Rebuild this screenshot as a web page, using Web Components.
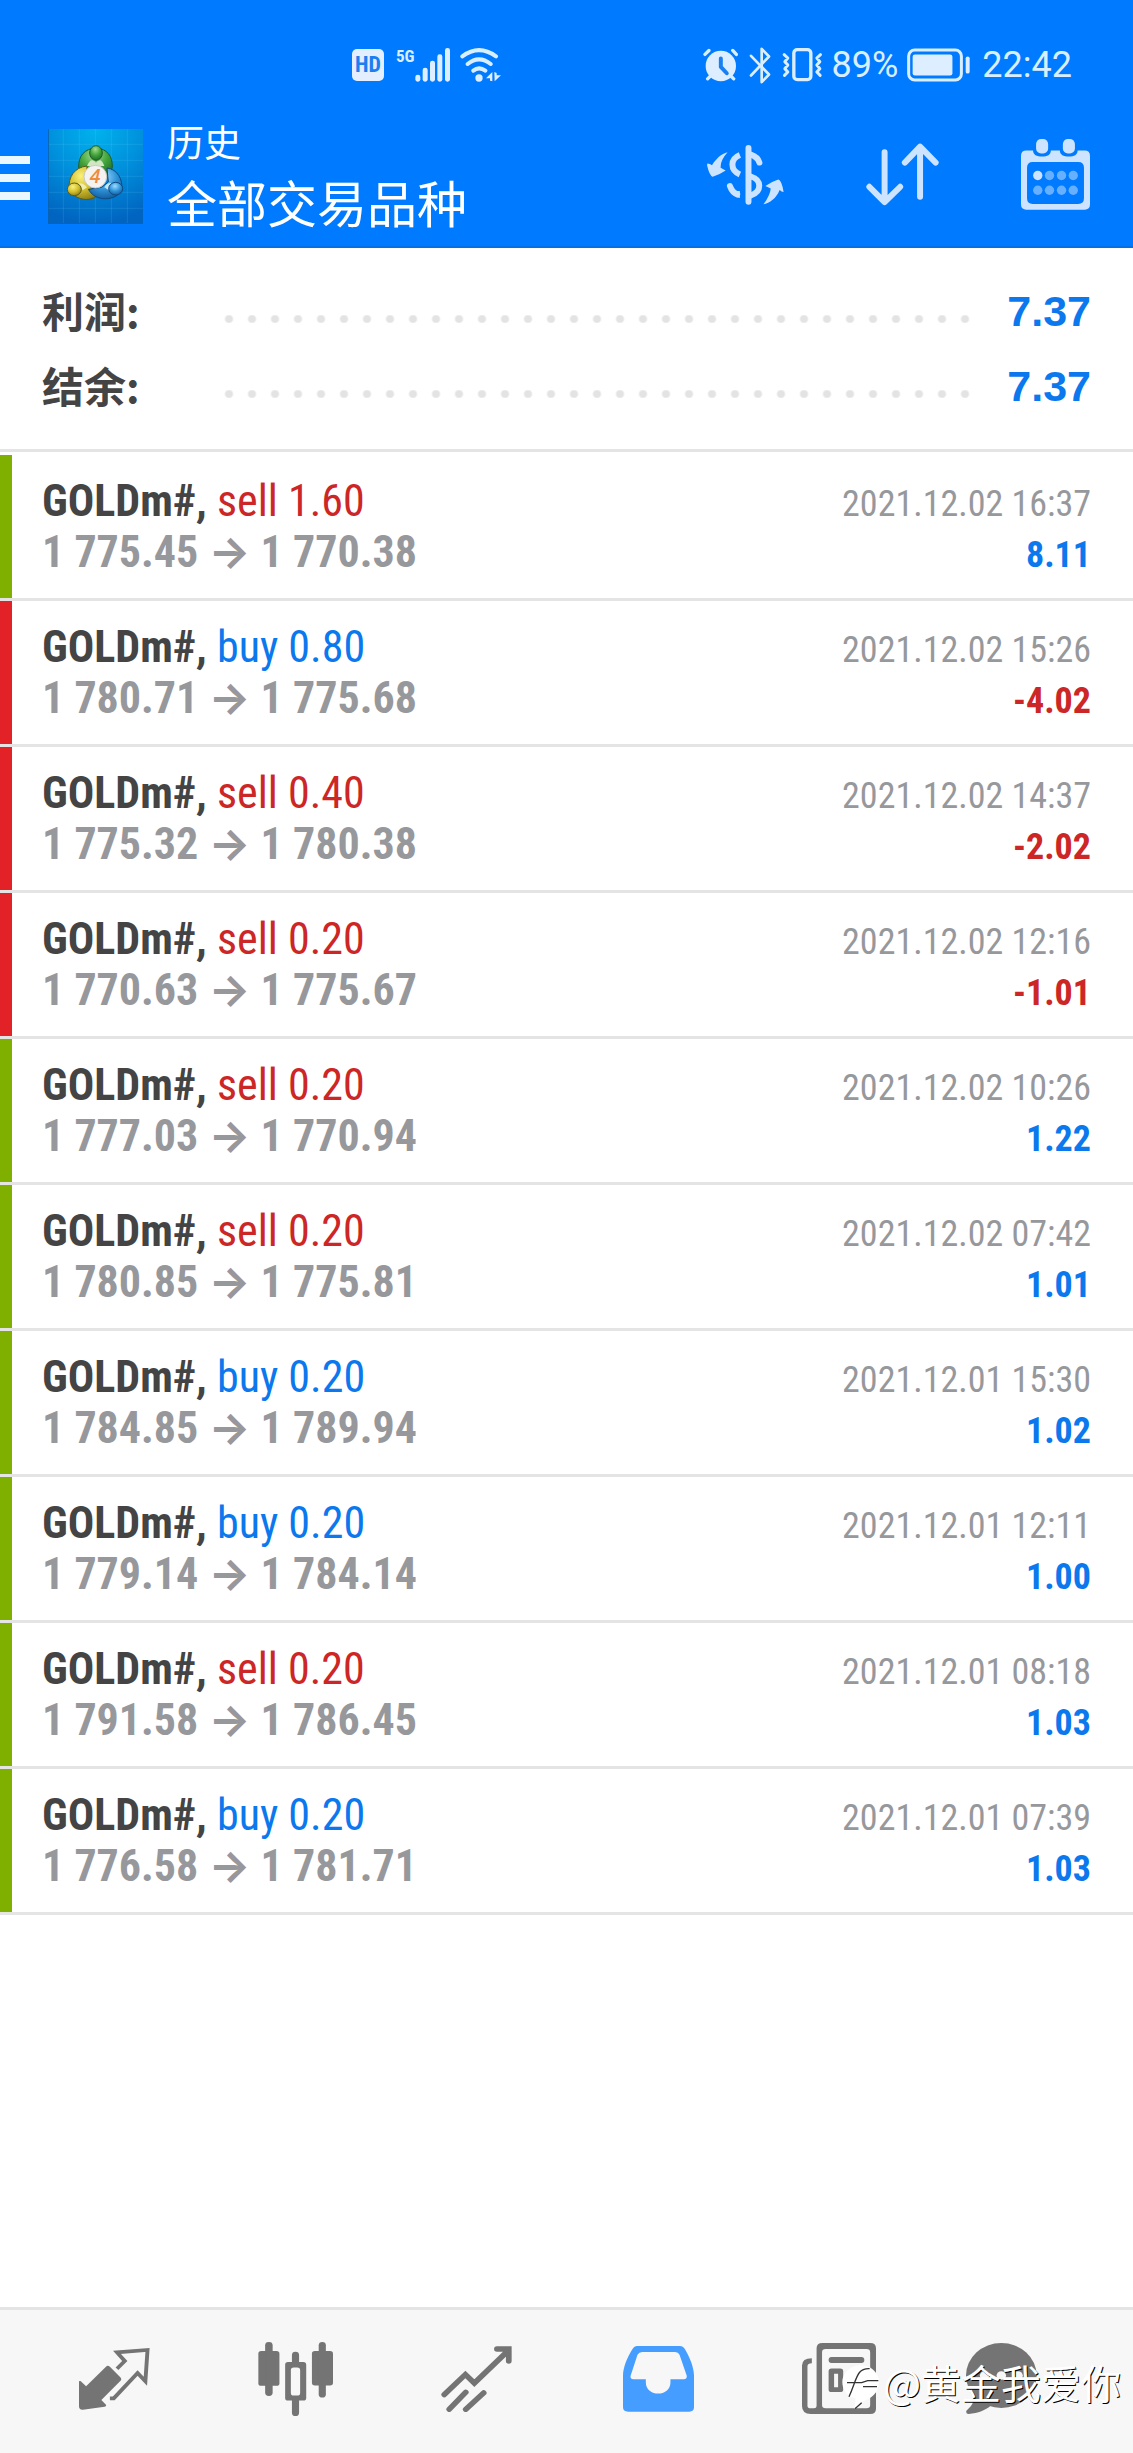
<!DOCTYPE html>
<html lang="zh-CN">
<head>
<meta charset="utf-8">
<meta name="viewport" content="width=device-width, initial-scale=1">
<title>历史</title>
<style>
html,body{margin:0;background:#fff}
body{
  --blue:#007aff;--buy:#0b78ee;--sell:#cd2626;--ink:#444;--muted:#97989c;--line:#e4e4e4;
  --narrow:"Roboto Condensed","Liberation Sans Narrow","Liberation Sans",sans-serif;
  --cjk:"Noto Sans CJK SC",sans-serif;
  font-family:var(--cjk);color:var(--ink)
}
</style>
</head>
<body>
<app-screen>
  <status-bar slot="top"></status-bar>
  <tool-bar slot="top"><span slot="caption">历史</span><span slot="title">全部交易品种</span></tool-bar>
  <account-summary>
    <summary-line><span slot="label">利润:</span>7.37</summary-line>
    <summary-line><span slot="label">结余:</span>7.37</summary-line>
  </account-summary>
  <trade-list>
    <trade-row side="sell" volume="1.60" open="1 775.45" close="1 770.38" time="2021.12.02 16:37" profit="8.11">GOLDm#</trade-row>
    <trade-row side="buy" volume="0.80" open="1 780.71" close="1 775.68" time="2021.12.02 15:26" profit="-4.02">GOLDm#</trade-row>
    <trade-row side="sell" volume="0.40" open="1 775.32" close="1 780.38" time="2021.12.02 14:37" profit="-2.02">GOLDm#</trade-row>
    <trade-row side="sell" volume="0.20" open="1 770.63" close="1 775.67" time="2021.12.02 12:16" profit="-1.01">GOLDm#</trade-row>
    <trade-row side="sell" volume="0.20" open="1 777.03" close="1 770.94" time="2021.12.02 10:26" profit="1.22">GOLDm#</trade-row>
    <trade-row side="sell" volume="0.20" open="1 780.85" close="1 775.81" time="2021.12.02 07:42" profit="1.01">GOLDm#</trade-row>
    <trade-row side="buy" volume="0.20" open="1 784.85" close="1 789.94" time="2021.12.01 15:30" profit="1.02">GOLDm#</trade-row>
    <trade-row side="buy" volume="0.20" open="1 779.14" close="1 784.14" time="2021.12.01 12:11" profit="1.00">GOLDm#</trade-row>
    <trade-row side="sell" volume="0.20" open="1 791.58" close="1 786.45" time="2021.12.01 08:18" profit="1.03">GOLDm#</trade-row>
    <trade-row side="buy" volume="0.20" open="1 776.58" close="1 781.71" time="2021.12.01 07:39" profit="1.03">GOLDm#</trade-row>
  </trade-list>
  <tab-bar slot="bottom"><water-mark>@黄金我爱你</water-mark></tab-bar>
</app-screen>

<script>
function define(name, html, setup) {
  const t = document.createElement('template');
  t.innerHTML = html;
  customElements.define(name, class extends HTMLElement {
    constructor() {
      super();
      this.attachShadow({mode: 'open'}).appendChild(t.content.cloneNode(true));
    }
    connectedCallback() { if (setup) setup(this, this.shadowRoot); }
  });
}

define('app-screen', `
<style>
:host{display:flex;flex-direction:column;min-height:100vh}
main{flex:1}
</style>
<header><slot name="top"></slot></header><main><slot></slot></main><slot name="bottom"></slot>`);

define('status-bar', `
<style>
:host{display:flex;justify-content:space-between;align-items:center;height:82px;padding:24px 61px 0 352px;background:var(--blue);color:#d9efff;font:36px/40px Roboto,sans-serif}
div{display:flex;align-items:center}
svg{display:block;fill:#dceeff;stroke:none}
.l{fill:none;stroke:#d9efff;stroke-linecap:round;stroke-linejoin:round}
.hd{width:32px;height:32px;border-radius:5px;background:#e3efff;color:#1a7ff0;font:bold 22px/32px var(--narrow);text-align:center}
.net{margin-left:12px;align-self:flex-start;font:bold 17px/16px var(--narrow)}
.wifi{margin-left:10px}
.right svg+svg{margin-left:11px}
.pct{margin:0 9px}
time{margin-left:12px}
</style>
<div>
  <span class="hd">HD</span><span class="net">5G</span>
  <svg width="35" height="34" viewBox="250 80 105 102"><rect x="251" y="160" width="15" height="21" rx="7"/><rect x="273" y="139" width="15" height="42" rx="7"/><rect x="295" y="118" width="15" height="63" rx="7"/><rect x="317" y="99" width="15" height="82" rx="7"/><rect x="340" y="80" width="15" height="101" rx="7"/></svg>
  <svg class="wifi" width="41" height="34" viewBox="385 80 123 102"><g class="l" stroke-width="12"><path d="M392 105Q442 68 493 105M408 128Q442 100 477 128M425 148Q442 134 461 148"/></g><circle cx="442" cy="170" r="11"/><path d="M463 171L482 152V180L475 178V171ZM488 152L495 155V162H508L489 180Z"/></svg>
</div>
<div class="right">
  <svg width="35" height="34" viewBox="70 80 106 102"><circle cx="124" cy="134" r="46"/><path class="l" stroke-width="10" d="M84 173L95 162M163 173L152 162M76 99L88 87M160 87L171 99"/><path d="M124 111V137L142 156" fill="none" stroke="#1a7ff0" stroke-width="12" stroke-linecap="round" stroke-linejoin="round"/></svg>
  <svg width="22" height="37" viewBox="208 75 66 110"><path class="l" stroke-width="8" d="M214 160L268 103L246 80V180L268 157L214 101"/></svg>
  <svg width="41" height="34" viewBox="311 80 122 102"><g class="l"><rect x="346" y="85" width="51" height="90" rx="10" stroke-width="10"/><path stroke-width="9" d="M317 100L328 110L319 121L328 131L319 142L328 152L318 162M426 100L415 110L424 121L415 131L424 142L415 152L425 162"/></g></svg>
  <span class="pct">89%</span>
  <svg width="63" height="34" viewBox="681 82 190 102"><rect class="l" x="686" y="88" width="159" height="90" rx="18" stroke-width="9"/><rect x="698" y="101" width="120" height="64" rx="7"/><rect x="858" y="107" width="12" height="52" rx="6"/></svg>
  <time>22:42</time>
</div>`);

define('tool-bar', `
<style>
:host{display:flex;align-items:center;height:140px;padding-right:43px;background:var(--blue);border-bottom:2px solid #0570e3;color:#fff}
button{display:block;padding:0;border:0;background:none;color:#cce4ff}
svg{display:block}
.menu{padding-top:3px}
.logo{margin:0 24px 0 18px}
.titles{flex:1;display:flex;flex-direction:column}
.cap{font-size:37px;line-height:50px}
h1{margin:0;font-size:50px;line-height:70px;font-weight:400}
.actions{display:flex;align-items:center;gap:82px;padding-bottom:3px}
.s{fill:none;stroke:currentColor;stroke-width:18;stroke-linecap:round;stroke-linejoin:round}
</style>
<button class="menu" aria-label="菜单"><svg width="30" height="44" viewBox="0 0 30 44" fill="#ebf7ff"><path d="M0 0H30V8H0ZM0 18H30V26H0ZM0 36H30V44H0Z"/></svg></button>
<svg class="logo" width="95" height="95" viewBox="145 57 285 285">
  <defs>
    <radialGradient id="bg" cx=".5" cy="0" r="1"><stop offset="0" stop-color="#00b3ee"/><stop offset=".5" stop-color="#0090dc"/><stop offset="1" stop-color="#0064c0"/></radialGradient>
    <radialGradient id="g" cx=".45" cy=".25" r=".8"><stop offset="0" stop-color="#a6dc90"/><stop offset=".5" stop-color="#43a53c"/><stop offset="1" stop-color="#1b6524"/></radialGradient>
    <radialGradient id="y" cx=".4" cy=".3" r=".8"><stop offset="0" stop-color="#faf07c"/><stop offset=".5" stop-color="#d3c02e"/><stop offset="1" stop-color="#81740f"/></radialGradient>
    <radialGradient id="b" cx=".45" cy=".3" r=".8"><stop offset="0" stop-color="#9bdcff"/><stop offset=".5" stop-color="#2f93d8"/><stop offset="1" stop-color="#0c4f92"/></radialGradient>
  </defs>
  <path fill="url(#bg)" d="M145 57H430V342H145Z"/>
  <path d="M191 57V342M239 57V342M287 57V342M335 57V342M383 57V342M145 103H430M145 151H430M145 199H430M145 247H430M145 295H430" stroke="#7fdcff" stroke-opacity=".22" stroke-width="2"/>
  <path d="M146 57V341H429" fill="none" stroke="#0b62b0" stroke-width="3"/>
  <g stroke-width="3">
    <path d="M237 172C236 138 254 116 289 114C322 116 339 138 338 172Q334 192 322 202L300 172L262 178Q240 184 237 172Z" fill="url(#g)" stroke="#1d5e28"/>
    <path d="M262 168C224 172 206 200 208 238C222 262 244 270 268 268Q288 266 298 252L262 222Z" fill="url(#y)" stroke="#5e5a16"/>
    <path d="M322 174C354 178 370 208 366 240C354 262 332 268 308 266Q280 262 266 238L306 232L326 216Z" fill="url(#b)" stroke="#114a80"/>
    <path d="M262 168Q274 140 289 158Q304 140 314 168Z" fill="#d3e6c4"/>
    <path d="M230 222Q248 214 262 232L250 240Z" fill="#f1edb0"/>
    <path d="M314 232Q322 216 340 220L332 244Z" fill="#c4e6f6"/>
    <ellipse cx="289" cy="129" rx="19" ry="22" fill="url(#g)" stroke="#1d5e28"/>
    <ellipse cx="224" cy="238" rx="21" ry="19" fill="url(#y)" stroke="#5e5a16"/>
    <ellipse cx="348" cy="236" rx="21" ry="19" fill="url(#b)" stroke="#114a80"/>
    <circle cx="287" cy="200" r="34" fill="#f5f3f1" stroke="#c9c9c9"/>
  </g>
  <text x="286" y="220" text-anchor="middle" font-family="Open Sans,sans-serif" font-weight="600" font-style="italic" font-size="58" fill="#f08a3c">4</text>
</svg>
<div class="titles"><span class="cap"><slot name="caption"></slot></span><h1><slot name="title"></slot></h1></div>
<div class="actions">
  <button aria-label="品种"><svg width="77" height="60" viewBox="81 104 232 181"><g class="s"><path d="M206 113V275"/><path stroke-linecap="butt" d="M180 134C150 146 150 180 180 193"/><path d="M213 133C228 138 236 147 239 157M213 199C247 209 247 245 213 256"/><path d="M150 228C155 242 163 250 172 253"/></g><path fill="currentColor" d="M165 243H180V264Q170 262 165 258ZM82 160Q90 160 96 165C108 146 124 130 143 126C128 142 121 158 122 173L137 181Q118 194 98 200Q88 196 81 165ZM312 246Q306 246 300 240C290 265 270 280 251 283C264 266 272 248 273 235L257 228Q276 214 296 208Q306 210 312 246Z"/></svg></button>
  <button aria-label="排序"><svg width="73" height="63" viewBox="553 103 218 190"><path class="s" d="M608 131V280M562 235L608 281L655 235M715 265V116M669 162L715 114L762 162"/></svg></button>
  <button aria-label="日期"><svg width="69" height="71" viewBox="1025 89 206 212"><path fill="currentColor" fill-rule="evenodd" d="M1041 123H1061C1061 136 1072 141 1088 141S1114 136 1114 123H1141C1141 136 1152 141 1168 141S1194 136 1194 123H1215Q1231 123 1231 139V284Q1231 300 1215 300H1041Q1025 300 1025 284V139Q1025 123 1041 123ZM1060 158Q1043 158 1043 175V266Q1043 283 1060 283H1196Q1213 283 1213 266V175Q1213 158 1196 158Z"/><g fill="currentColor"><rect x="1070" y="89" width="36" height="43" rx="15"/><rect x="1150" y="89" width="36" height="43" rx="15"/><circle cx="1075" cy="198" r="14"/></g><g fill="#66b0ff"><circle cx="1110" cy="198" r="14"/><circle cx="1146" cy="198" r="14"/><circle cx="1181" cy="198" r="14"/><circle cx="1075" cy="242" r="14"/><circle cx="1110" cy="242" r="14"/><circle cx="1146" cy="242" r="14"/><circle cx="1181" cy="242" r="14"/></g></svg></button>
</div>`);

define('account-summary', `
<style>:host{display:block;padding:26px 42px 25px;border-bottom:3px solid var(--line)}</style><slot></slot>`);

define('summary-line', `
<style>
:host{display:flex;align-items:flex-start;height:75px;color:var(--buy);font:bold 43px/75px "Liberation Sans",sans-serif}
.label{width:175px;color:var(--ink);font:bold 42px/71px var(--cjk)}
.dots{flex:1;height:8px;margin:41px 27px 0 0;background:radial-gradient(circle at 12px 4px,#e3e3e3 3px,#e3e3e300 5px) 0 0/23px 8px repeat-x}
</style>
<span class="label"><slot name="label"></slot></span><span class="dots"></span><slot></slot>`);

define('trade-list', `<style>:host{display:block;padding-top:3px}</style><div role="list"><slot></slot></div>`);

define('trade-row', `
<style>
:host{display:flex;justify-content:space-between;align-items:baseline;height:143px;margin-bottom:3px;box-sizing:border-box;padding:21px 42px 0 30px;border-left:12px solid #7fb000;box-shadow:0 3px 0 var(--line);font:44px/51px var(--narrow)}
:host([loss]){border-left-color:#e32227}
div{white-space:nowrap}
.right{text-align:right;font-size:36px;color:var(--muted)}
b{color:var(--ink)}
.prices{color:var(--muted);font-weight:bold}
.arrow{font-family:Inter,sans-serif;line-height:1px}
.deal[data-side=buy],.profit{color:var(--buy)}
.deal[data-side=sell],:host([loss]) .profit{color:var(--sell)}
.profit{font-weight:bold}
</style>
<div><div><b><slot></slot>,</b> <span class="deal"></span></div><div class="prices"><span class="open"></span> <span class="arrow">→</span> <span class="close"></span></div></div>
<div class="right"><div class="time"></div><div class="profit"></div></div>`, (el, root) => {
  const get = n => el.getAttribute(n);
  const deal = root.querySelector('.deal');
  deal.dataset.side = get('side');
  deal.textContent = get('side') + ' ' + get('volume');
  for (const n of ['open', 'close', 'time', 'profit']) root.querySelector('.' + n).textContent = get(n);
  el.setAttribute('role', 'listitem');
  el.toggleAttribute('loss', get('profit').startsWith('-'));
});

define('tab-bar', `
<style>
:host{display:block;position:relative;background:#f7f7f7;border-top:3px solid var(--line)}
nav{display:grid;grid-template-columns:repeat(5,181fr) 143fr;height:143px;padding:0 60px 6px 24px;box-sizing:border-box}
button{display:flex;align-items:center;justify-content:center;padding:0;border:0;background:none;color:#747474}
button[aria-current]{color:#459dff}
svg{display:block;fill:currentColor}
.s{fill:none;stroke:currentColor}
</style>
<nav>
<button aria-label="行情"><svg preserveAspectRatio="none" width="71" height="62" viewBox="221 147 200 186"><path d="M221 247Q225 244 229 250L241 262L297 203Q302 198 308 203L336 233Q343 240 338 245L284 303L297 317Q299 322 293 323L232 332Q221 333 221 322Z"/><path class="s" stroke-width="11" d="M328 209L350 186L328 160L414 153L408 247L386 222L319 298H308"/></svg></button>
<button aria-label="图表"><svg preserveAspectRatio="none" width="75" height="74" viewBox="721 128 210 221"><rect x="722" y="155" width="59" height="104" rx="8"/><rect x="741" y="128" width="21" height="161" rx="10"/><rect x="872" y="155" width="59" height="103" rx="8"/><rect x="891" y="128" width="20" height="166" rx="10"/><path fill-rule="evenodd" d="M805 188H816V167A10 10 0 0 1 836 167V188H848Q856 188 856 196V295Q856 303 848 303H836V339A10 10 0 0 1 816 339V303H805Q797 303 797 295V196Q797 188 805 188ZM821 204Q813 204 813 212V280Q813 288 821 288H831Q839 288 839 280V212Q839 204 831 204Z"/></svg></button>
<button aria-label="交易"><svg preserveAspectRatio="none" width="71" height="66" viewBox="1234 137 198 197"><path class="s" stroke-width="16" stroke-linecap="round" d="M1243 282L1302 222L1327 248L1422 150M1390 146H1423V182M1257 326L1303 275M1303 326L1353 277"/></svg></button>
<button aria-label="历史" aria-current="page"><svg preserveAspectRatio="none" width="71" height="66" viewBox="169 137 196 197"><path fill-rule="evenodd" d="M208 137H326Q336 138 341 148C352 168 365 200 365 225V320Q365 333 352 333H183Q169 333 169 320V225C169 200 182 168 194 148Q199 138 208 137ZM222 155Q213 156 209 163L190 226Q188 236 198 236H232V245C232 268 249 279 266 279S300 268 300 245V236H337Q346 236 345 226L325 163Q322 156 313 155Z"/></svg></button>
<button aria-label="新闻"><svg preserveAspectRatio="none" width="74" height="71" viewBox="664 128 203 214"><path fill-rule="evenodd" d="M720 128H851Q867 128 867 144V326Q867 342 851 342H688Q664 342 664 318V196Q664 174 691 174V189Q679 189 679 198V318Q679 325 688 325H697Q704 325 704 318V144Q704 128 720 128ZM729 146Q719 146 719 156V315Q719 325 729 325H841Q851 325 851 315V156Q851 146 841 146ZM745 170H827A8 9 0 0 1 827 188H745A8 9 0 0 1 745 170ZM745 205H769Q777 205 777 213V268Q777 276 769 276H745Q737 276 737 268V213Q737 205 745 205ZM752 221V261H763V221ZM801 205H827A8 8 0 0 1 827 221H801A8 8 0 0 1 801 205ZM801 232H827A8 8 0 0 1 827 248H801A8 8 0 0 1 801 232ZM801 260H827A8 8 0 0 1 827 276H801A8 8 0 0 1 801 260Z"/></svg></button>
<button aria-label="消息"><svg preserveAspectRatio="none" width="71" height="71" viewBox="1111 128 195 214"><ellipse cx="1208" cy="226" rx="97" ry="98"/><path d="M1114 255C1142 290 1134 312 1112 332Q1110 342 1118 342C1145 340 1165 330 1178 318Z"/><g fill="#f7f7f7"><circle cx="1162" cy="226" r="13"/><circle cx="1208" cy="226" r="13"/><circle cx="1254" cy="226" r="13"/></g></svg></button>
</nav>
<slot></slot>`);

define('water-mark', `
<style>
:host{position:absolute;right:12px;bottom:44px;display:flex;align-items:center;gap:3px;color:#fff;font:400 40px/52px var(--cjk);text-shadow:1px 1px 0 #000}
svg{margin-top:11px}
</style>
<svg width="38" height="44" viewBox="42 121 112 132"><path d="M97 122A55 50 0 0 1 152 170C151 208 128 222 100 232L78 252L82 221C58 216 42 198 42 172A55 50 0 0 1 97 122Z" fill="#fff"/><path d="M124 132C84 130 86 164 62 216M56 174H100L118 168H150M104 186H146M100 234L80 252" fill="none" stroke="#333" stroke-width="4"/></svg>
<span><slot></slot></span>`);
</script>
</body>
</html>
